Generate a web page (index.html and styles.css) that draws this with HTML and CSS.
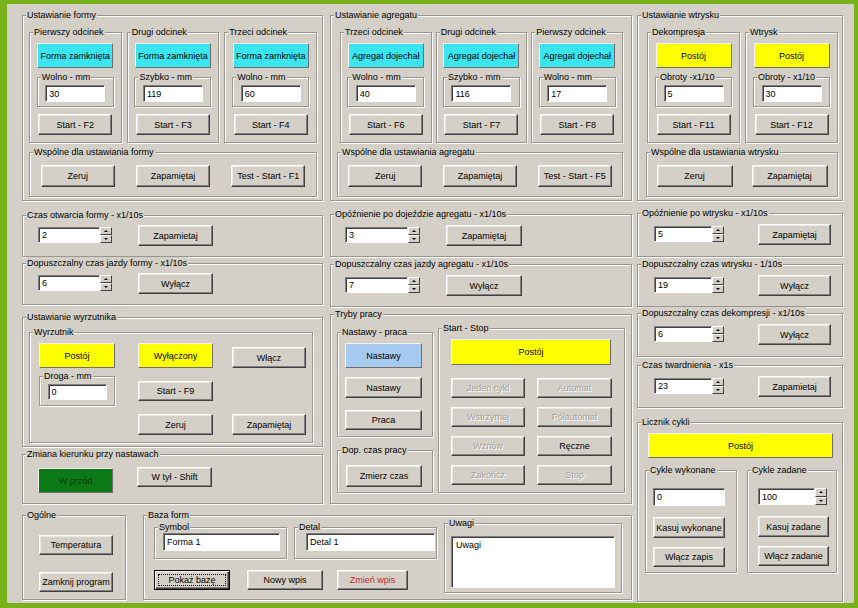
FILE: index.html
```html
<!DOCTYPE html>
<html lang="pl">
<head>
<meta charset="utf-8">
<title>Sterowanie wtryskarką</title>
<link rel="stylesheet" href="styles.css">
</head>
<body>
<div class="win">
  <div class="left">
    <!-- Column 1 -->
    <div class="col">
      <div class="grp g-set g-form">
        <span class="cap">Ustawianie formy</span>
        <div class="segs">
          <div class="grp seg">
            <span class="cap">Pierwszy odcinek</span>
            <div class="ind cyan">Forma zamknięta</div>
            <div class="grp field"><span class="cap">Wolno - mm</span><div class="inp">30</div></div>
            <button class="btn">Start - F2</button>
          </div>
          <div class="grp seg">
            <span class="cap">Drugi odcinek</span>
            <div class="ind cyan">Forma zamknięta</div>
            <div class="grp field"><span class="cap">Szybko - mm</span><div class="inp">119</div></div>
            <button class="btn">Start - F3</button>
          </div>
          <div class="grp seg">
            <span class="cap">Trzeci odcinek</span>
            <div class="ind cyan">Forma zamknięta</div>
            <div class="grp field"><span class="cap">Wolno - mm</span><div class="inp">60</div></div>
            <button class="btn">Start - F4</button>
          </div>
        </div>
        <div class="grp common">
          <span class="cap">Wspólne dla ustawiania formy</span>
          <button class="btn">Zeruj</button>
          <button class="btn">Zapamiętaj</button>
          <button class="btn">Test - Start - F1</button>
        </div>
      </div>

      <div class="grp tbox c1 gap14">
        <span class="cap">Czas otwarcia formy - x1/10s</span>
        <div class="spin"><div class="inp">2</div><div class="arrows"><i class="up"></i><i class="dn"></i></div></div>
        <button class="btn">Zapamietaj</button>
      </div>

      <div class="grp tbox c1 gap6">
        <span class="cap">Dopuszczalny czas jazdy formy - x1/10s</span>
        <div class="spin"><div class="inp">6</div><div class="arrows"><i class="up"></i><i class="dn"></i></div></div>
        <button class="btn">Wyłącz</button>
      </div>

      <div class="grp g-wyr">
        <span class="cap">Ustawianie wyrzutnika</span>
        <div class="grp wyr">
          <span class="cap">Wyrzutnik</span>
          <div class="ind yellow w76">Postój</div>
          <div class="ind yellow w75">Wyłączony</div>
          <button class="btn w74 end">Włącz</button>
          <div class="grp field w76"><span class="cap">Droga - mm</span><div class="inp">0</div></div>
          <button class="btn w75 mid">Start - F9</button>
          <span></span>
          <span></span>
          <button class="btn w75">Zeruj</button>
          <button class="btn w74">Zapamiętaj</button>
        </div>
      </div>

      <div class="grp g-kier">
        <span class="cap">Zmiana kierunku przy nastawach</span>
        <div class="ind green">W przód</div>
        <button class="btn">W tył - Shift</button>
      </div>
    </div>

    <!-- Column 2 -->
    <div class="col">
      <div class="grp g-set g-agr">
        <span class="cap">Ustawianie agregatu</span>
        <div class="segs">
          <div class="grp seg">
            <span class="cap">Trzeci odcinek</span>
            <div class="ind cyan">Agregat dojechał</div>
            <div class="grp field"><span class="cap">Wolno - mm</span><div class="inp">40</div></div>
            <button class="btn">Start - F6</button>
          </div>
          <div class="grp seg">
            <span class="cap">Drugi odcinek</span>
            <div class="ind cyan">Agregat dojechał</div>
            <div class="grp field"><span class="cap">Szybko - mm</span><div class="inp">116</div></div>
            <button class="btn">Start - F7</button>
          </div>
          <div class="grp seg">
            <span class="cap">Pierwszy odcinek</span>
            <div class="ind cyan">Agregat dojechał</div>
            <div class="grp field"><span class="cap">Wolno - mm</span><div class="inp">17</div></div>
            <button class="btn">Start - F8</button>
          </div>
        </div>
        <div class="grp common">
          <span class="cap">Wspólne dla ustawiania agregatu</span>
          <button class="btn">Zeruj</button>
          <button class="btn">Zapamiętaj</button>
          <button class="btn">Test - Start - F5</button>
        </div>
      </div>

      <div class="grp tbox c2 gap13">
        <span class="cap">Opóźnienie po dojeździe agregatu - x1/10s</span>
        <div class="spin"><div class="inp">3</div><div class="arrows"><i class="up"></i><i class="dn"></i></div></div>
        <button class="btn">Zapamiętaj</button>
      </div>

      <div class="grp tbox c2 gap7">
        <span class="cap">Dopuszczalny czas jazdy agregatu - x1/10s</span>
        <div class="spin"><div class="inp">7</div><div class="arrows"><i class="up"></i><i class="dn"></i></div></div>
        <button class="btn">Wyłącz</button>
      </div>

      <div class="grp g-tryby">
        <span class="cap">Tryby pracy</span>
        <div class="tr-left">
          <div class="grp nast">
            <span class="cap">Nastawy - praca</span>
            <div class="ind blue">Nastawy</div>
            <button class="btn b-nast">Nastawy</button>
            <button class="btn b-praca">Praca</button>
          </div>
          <div class="grp dop">
            <span class="cap">Dop. czas pracy</span>
            <button class="btn">Zmierz czas</button>
          </div>
        </div>
        <div class="grp ss">
          <span class="cap">Start - Stop</span>
          <div class="ind yellow">Postój</div>
          <div class="ss-grid">
            <button class="btn dis">Jeden cykl</button>
            <button class="btn dis">Automat</button>
            <button class="btn dis">Wstrzymaj</button>
            <button class="btn dis">Półautomat</button>
            <button class="btn dis">Wznów</button>
            <button class="btn">Ręczne</button>
            <button class="btn dis">Zakończ</button>
            <button class="btn dis">Stop</button>
          </div>
        </div>
      </div>
    </div>

    <!-- Bottom row -->
    <div class="bottom">
      <div class="grp ogolne">
        <span class="cap">Ogólne</span>
        <button class="btn">Temperatura</button>
        <button class="btn">Zamknij program</button>
      </div>
      <div class="grp baza">
        <span class="cap">Baza form</span>
        <div class="bz-left">
          <div class="bz-fields">
            <div class="grp symbol"><span class="cap">Symbol</span><div class="inp">Forma 1</div></div>
            <div class="grp detal"><span class="cap">Detal</span><div class="inp">Detal 1</div></div>
          </div>
          <div class="bz-btns">
            <button class="btn focus"><span class="dot">Pokaż bazę</span></button>
            <button class="btn">Nowy wpis</button>
            <button class="btn red">Zmień wpis</button>
          </div>
        </div>
        <div class="grp uwagi">
          <span class="cap">Uwagi</span>
          <div class="memo">Uwagi</div>
        </div>
      </div>
    </div>
  </div>

  <!-- Column 3 -->
  <div class="col c3col">
    <div class="grp g-set g-wtr">
      <span class="cap">Ustawianie wtrysku</span>
      <div class="segs">
        <div class="grp seg">
          <span class="cap">Dekompresja</span>
          <div class="ind yellow">Postój</div>
          <div class="grp field"><span class="cap">Obroty -x1/10</span><div class="inp">5</div></div>
          <button class="btn">Start - F11</button>
        </div>
        <div class="grp seg">
          <span class="cap">Wtrysk</span>
          <div class="ind yellow">Postój</div>
          <div class="grp field"><span class="cap">Obroty - x1/10</span><div class="inp">30</div></div>
          <button class="btn">Start - F12</button>
        </div>
      </div>
      <div class="grp common">
        <span class="cap">Wspólne dla ustawiania wtrysku</span>
        <button class="btn">Zeruj</button>
        <button class="btn">Zapamiętaj</button>
      </div>
    </div>

    <div class="grp tbox c3 gap12 h44">
      <span class="cap">Opóźnienie po wtrysku - x1/10s</span>
      <div class="spin"><div class="inp">5</div><div class="arrows"><i class="up"></i><i class="dn"></i></div></div>
      <button class="btn">Zapamiętaj</button>
    </div>
    <div class="grp tbox c3 gap7">
      <span class="cap">Dopuszczalny czas wtrysku - 1/10s</span>
      <div class="spin"><div class="inp">19</div><div class="arrows"><i class="up"></i><i class="dn"></i></div></div>
      <button class="btn">Wyłącz</button>
    </div>
    <div class="grp tbox c3 gap6 h44">
      <span class="cap">Dopuszczalny czas dekompresji - x1/10s</span>
      <div class="spin"><div class="inp">6</div><div class="arrows"><i class="up"></i><i class="dn"></i></div></div>
      <button class="btn">Wyłącz</button>
    </div>
    <div class="grp tbox c3 gap8">
      <span class="cap">Czas twardnienia - x1s</span>
      <div class="spin"><div class="inp">23</div><div class="arrows"><i class="up"></i><i class="dn"></i></div></div>
      <button class="btn">Zapamietaj</button>
    </div>

    <div class="grp licznik">
      <span class="cap">Licznik cykli</span>
      <div class="ind yellow">Postój</div>
      <div class="cyk">
        <div class="grp cyk-w">
          <span class="cap">Cykle wykonane</span>
          <div class="inp">0</div>
          <button class="btn b1">Kasuj wykonane</button>
          <button class="btn b2">Włącz zapis</button>
        </div>
        <div class="grp cyk-z">
          <span class="cap">Cykle zadane</span>
          <div class="spin"><div class="inp">100</div><div class="arrows"><i class="up"></i><i class="dn"></i></div></div>
          <button class="btn b1">Kasuj zadane</button>
          <button class="btn b2">Włącz zadanie</button>
        </div>
      </div>
    </div>
  </div>
</div>
</body>
</html>
```

FILE: styles.css
```css
* { box-sizing: border-box; }
html, body { margin: 0; padding: 0; }
body {
  background: #79b11b;
  width: 858px;
  height: 608px;
  overflow: hidden;
  font-family: "Liberation Sans", Arial, sans-serif;
  font-size: 9px;
  color: #000;
}
.win {
  margin: 4px 0 0 7px;
  width: 847px;
  height: 599px;
  background: #d4d0c8;
  padding: 11px 0 0 15px;
  display: flex;
  gap: 5px;
  align-items: flex-start;
}
.left {
  display: grid;
  grid-template-columns: 301px 302px;
  grid-template-rows: 489px 85px;
  column-gap: 7px;
  row-gap: 11px;
}
.col { display: flex; flex-direction: column; }
.c3col { width: 206px; }

/* group box */
.grp {
  position: relative;
  border: 1px solid #9a968e;
  box-shadow: inset 1px 1px 0 #fff, 1px 1px 0 #fff;
}
.cap {
  position: absolute;
  top: -7px;
  left: 3px;
  padding: 0 1px;
  line-height: 12px;
  background: #d4d0c8;
  white-space: nowrap;
}

/* controls */
.btn {
  font: inherit;
  color: #000;
  margin: 0;
  padding: 0;
  background: #d4d0c8;
  border: 1px solid;
  border-color: #fff #404040 #404040 #fff;
  box-shadow: inset -1px -1px 0 #808080, inset 1px 1px 0 #ebe9e4;
  display: flex;
  align-items: center;
  justify-content: center;
  white-space: nowrap;
}
.btn.dis { color: #a3a098; text-shadow: 1px 1px 0 #fff; }
.btn.red { color: #c42a2a; }
.btn.focus {
  border-color: #000;
  box-shadow: inset 1px 1px 0 #fff, inset -1px -1px 0 #404040, inset -2px -2px 0 #808080;
  padding: 3px;
}
.btn.focus .dot {
  flex: 1;
  align-self: stretch;
  border: 1px dotted #000;
  display: flex;
  align-items: center;
  justify-content: center;
}
.ind {
  display: flex;
  align-items: center;
  justify-content: center;
  border: 1px solid;
  border-color: #f4f4f4 #6f6f6f #6f6f6f #f4f4f4;
  white-space: nowrap;
}
.cyan { background: #3ae5ef; }
.yellow { background: #ffff00; }
.blue { background: #a6caf0; }
.green { background: #0b7a16; color: #06380a; }
.inp {
  background: #fff;
  border: 1px solid;
  border-color: #808080 #fff #fff #808080;
  box-shadow: inset 1px 1px 0 #404040;
  padding-left: 3px;
  display: flex;
  align-items: center;
  white-space: nowrap;
}
.spin { display: flex; }
.arrows { width: 12px; display: flex; flex-direction: column; }
.arrows i {
  flex: 1;
  background: #d4d0c8;
  border: 1px solid;
  border-color: #fff #404040 #404040 #fff;
  display: flex;
  align-items: center;
  justify-content: center;
}
.arrows i::before {
  content: "";
  border-left: 2px solid transparent;
  border-right: 2px solid transparent;
}
.arrows .up::before { border-bottom: 2px solid #000; }
.arrows .dn::before { border-top: 2px solid #000; }

/* top setting groups */
.g-set { height: 186px; padding: 16px 5px 0 6px; }
.segs { display: grid; grid-template-columns: repeat(3, 1fr); column-gap: 5px; }
.seg {
  height: 111px;
  display: flex;
  flex-direction: column;
  align-items: center;
  padding-top: 10px;
}
.seg .ind { width: 76px; height: 25px; }
.field {
  width: 77px;
  height: 30px;
  margin-top: 9px;
  padding-top: 7px;
  display: flex;
  justify-content: center;
}
.field .inp { width: 60px; height: 17px; }
.seg .btn { width: 74px; height: 21px; margin-top: 7px; }
.common {
  height: 45px;
  margin-top: 9px;
  display: grid;
  grid-template-columns: repeat(3, 1fr);
  justify-items: center;
  align-items: start;
  padding-top: 12px;
}
.common .btn { width: 74px; height: 22px; }

.g-agr { padding-left: 6px; padding-right: 8px; }
.g-agr .segs { margin-left: 3px; column-gap: 4px; }

.g-wtr { padding-left: 9px; padding-right: 4px; }
.g-wtr .segs { grid-template-columns: repeat(2, 1fr); }
.g-wtr .common { grid-template-columns: repeat(2, 1fr); margin-left: -1px; }
.g-wtr .common .btn { width: 76px; }

/* time boxes */
.tbox { display: flex; align-items: flex-start; height: 43px; padding-top: 10px; }
.tbox .spin { margin-top: 2px; }
.tbox .inp { height: 16px; }
.tbox .arrows { height: 16px; }
.tbox .btn { height: 21px; }
.tbox.c1 { height: 42px; padding-top: 9px; padding-left: 15px; }
.tbox.c1 .inp { width: 62px; }
.tbox.c1 .btn { width: 75px; margin-left: 26px; }
.tbox.c2 { padding-left: 14px; }
.tbox.c2 .inp { width: 63px; }
.tbox.c2 .btn { width: 76px; margin-left: 26px; }
.tbox.c3 { padding-left: 16px; }
.tbox.c3 .inp { width: 58px; }
.tbox.c3 .btn { width: 73px; margin-left: 34px; }
.h44 { height: 44px !important; }
.gap6 { margin-top: 6px; }
.gap7 { margin-top: 7px; }
.gap8 { margin-top: 8px; }
.gap12 { margin-top: 12px; }
.gap13 { margin-top: 13px; }
.gap14 { margin-top: 14px; }

/* wyrzutnik */
.g-wyr { height: 130px; margin-top: 12px; padding: 14px 0 0 6px; }
.wyr {
  width: 284px;
  height: 111px;
  padding: 10px 0 0 9px;
  display: grid;
  grid-template-columns: 99px 94px 74px;
  grid-template-rows: 25px 30px 21px;
  row-gap: 8px;
}
.wyr .ind { height: 25px; }
.wyr .btn { height: 21px; }
.wyr .field { margin-top: 0; width: 76px; }
.wyr .field .inp { width: 59px; height: 16px; }
.w74 { width: 74px; }
.w75 { width: 75px; }
.w76 { width: 76px; }
.end { align-self: end; }
.wyr .mid { align-self: center; height: 20px; }

.g-kier { height: 50px; margin-top: 7px; padding: 13px 0 0 15px; display: flex; align-items: flex-start; }
.g-kier .ind { width: 75px; height: 25px; }
.g-kier .btn { width: 75px; height: 20px; margin-left: 24px; margin-top: -1px; }

/* tryby pracy */
.g-tryby { height: 190px; margin-top: 7px; padding: 13px 0 0 6px; display: flex; align-items: flex-start; gap: 5px; }
.tr-left { width: 96px; margin-top: 4px; display: flex; flex-direction: column; }
.nast { height: 105px; padding: 10px 0 0 7px; display: flex; flex-direction: column; }
.nast .ind { width: 77px; height: 25px; }
.nast .btn { width: 77px; }
.nast .b-nast { height: 21px; margin-top: 9px; }
.nast .b-praca { height: 20px; margin-top: 12px; }
.dop { height: 43px; margin-top: 13px; padding: 14px 0 0 8px; }
.dop .btn { width: 76px; height: 22px; }
.ss { width: 187px; height: 165px; padding: 10px 0 0 12px; }
.ss .ind { width: 160px; height: 26px; }
.ss-grid {
  margin-top: 13px;
  display: grid;
  grid-template-columns: 74px 75px;
  grid-auto-rows: 20px;
  column-gap: 12px;
  row-gap: 9px;
}

/* bottom row */
.bottom { grid-column: 1 / span 2; display: flex; gap: 17px; }
.ogolne { width: 104px; height: 85px; padding: 19px 0 0 16px; display: flex; flex-direction: column; }
.ogolne .btn { width: 74px; height: 20px; }
.ogolne .btn + .btn { margin-top: 17px; }
.baza { width: 489px; height: 85px; padding: 7px 0 0 10px; display: flex; align-items: flex-start; }
.bz-left { margin-top: 4px; width: 283px; }
.bz-fields { display: flex; gap: 7px; }
.symbol { width: 133px; height: 32px; padding: 5px 0 0 8px; }
.symbol .inp { width: 117px; height: 18px; }
.detal { width: 143px; height: 32px; padding: 5px 0 0 11px; }
.detal .inp { width: 129px; height: 18px; }
.bz-btns { display: flex; margin-top: 11px; }
.bz-btns .btn { width: 76px; height: 20px; }
.bz-btns .btn + .btn { margin-left: 17px; }
.bz-btns .red { width: 71px; margin-left: 14px !important; }
.uwagi { width: 178px; height: 70px; margin-left: 7px; padding: 12px 0 0 6px; }
.memo {
  width: 164px;
  height: 52px;
  background: #fff;
  border: 1px solid;
  border-color: #808080 #fff #fff #808080;
  box-shadow: inset 1px 1px 0 #404040;
  padding: 3px 4px;
}

/* licznik */
.licznik { height: 180px; margin-top: 14px; padding: 10px 0 0 10px; }
.licznik > .ind { width: 185px; height: 25px; }
.cyk { display: flex; gap: 10px; margin: 12px 0 0 -3px; }
.cyk-w { width: 92px; height: 103px; padding: 17px 0 0 7px; display: flex; flex-direction: column; }
.cyk-z { width: 90px; height: 103px; padding: 17px 0 0 10px; display: flex; flex-direction: column; }
.cyk-w > .inp { width: 72px; height: 18px; }
.cyk-z .inp { width: 57px; height: 17px; }
.cyk-z .arrows { height: 17px; }
.cyk-w .btn { width: 72px; }
.cyk-z .btn { width: 71px; }
.cyk .b1 { height: 21px; margin-top: 11px; }
.cyk .b2 { height: 20px; margin-top: 9px; }
```
